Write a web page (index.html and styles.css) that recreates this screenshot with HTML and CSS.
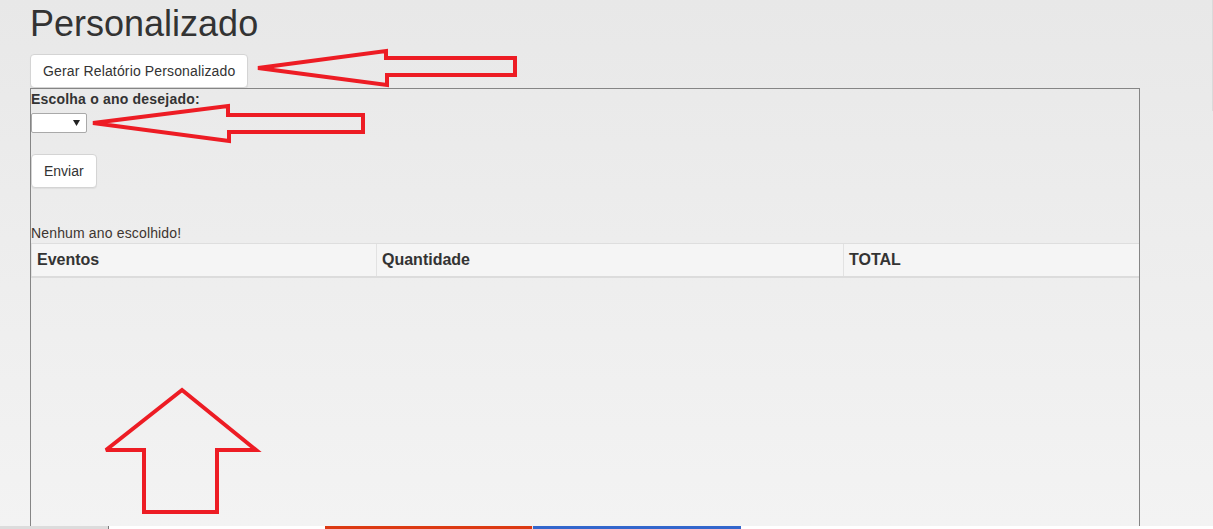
FILE: index.html
```html
<!DOCTYPE html>
<html lang="pt">
<head>
<meta charset="utf-8">
<title>Personalizado</title>
<link rel="stylesheet" href="styles.css">
</head>
<body>
<div class="page">
  <main class="content">
    <h1 class="title">Personalizado</h1>
    <div class="actions">
      <button class="btn" type="button">Gerar Relatório Personalizado</button>
    </div>
    <section class="panel">
      <form class="year-form">
        <label class="label">Escolha o ano desejado:</label>
        <div class="select">
          <svg class="caret" width="7" height="6" viewBox="0 0 7 6"><path d="M0 0H7L3.5 6Z" fill="#222"/></svg>
        </div>
        <div class="form-actions">
          <button class="btn" type="button">Enviar</button>
        </div>
      </form>
      <p class="msg">Nenhum ano escolhido!</p>
      <table class="report">
        <colgroup>
          <col class="col-ev">
          <col class="col-qt">
          <col class="col-tot">
        </colgroup>
        <thead>
          <tr>
            <th>Eventos</th>
            <th>Quantidade</th>
            <th>TOTAL</th>
          </tr>
        </thead>
        <tbody></tbody>
      </table>
    </section>
  </main>
  <div class="strip">
    <span class="seg seg-grey"></span>
    <span class="seg seg-white1"></span>
    <span class="seg seg-red"></span>
    <span class="seg seg-gap"></span>
    <span class="seg seg-blue"></span>
    <span class="seg seg-rest"></span>
  </div>
</div>

<svg class="annotations" width="1213" height="529" viewBox="0 0 1213 529">
  <polygon points="258,68 386,51 386,58 515,58 515,75 387,75 387,85" />
  <polygon points="93,123 228,106 228,115 363,115 363,132 229,132 229,141" />
  <polygon points="182,390 106,450 144,450 144,512 217,512 217,450 256,450" />
</svg>
<div class="scroll-edge"></div>
</body>
</html>
```
FILE: styles.css
```css
html, body {
  margin: 0;
  padding: 0;
  width: 1213px;
  height: 529px;
  overflow: hidden;
}

body {
  font-family: "Liberation Sans", Arial, sans-serif;
  font-size: 14px;
  line-height: 20px;
  color: #333;
  background: linear-gradient(#e8e8e8, #f3f3f3 526px);
  position: relative;
}

.page {
  display: flex;
  flex-direction: column;
  height: 529px;
}

.content {
  flex: 1;
  display: flex;
  flex-direction: column;
  padding-left: 30px;
  min-height: 0;
}

.title {
  margin: 4px 0 10px 0;
  font-size: 36px;
  line-height: 40px;
  font-weight: normal;
  color: #333;
}

.actions {
  display: flex;
}

.btn {
  font-family: "Liberation Sans", Arial, sans-serif;
  font-size: 14px;
  line-height: 20px;
  letter-spacing: 0.14px;
  color: #333;
  background: #fff;
  border: 1px solid #d4d4d4;
  border-radius: 4px;
  padding: 6px 12px;
  box-shadow: 0 1px 1px rgba(0, 0, 0, 0.06);
  height: 34px;
  box-sizing: border-box;
}

.panel {
  flex: 1;
  width: 1110px;
  box-sizing: border-box;
  border: 1px solid #858585;
  border-bottom: none;
  display: flex;
  flex-direction: column;
  overflow: hidden;
}

.year-form {
  display: flex;
  flex-direction: column;
  align-items: flex-start;
}

.label {
  font-weight: bold;
  letter-spacing: 0.2px;
  margin-bottom: 4px;
}

.select {
  width: 56px;
  height: 20px;
  box-sizing: border-box;
  background: #fff;
  border: 1px solid #a9a9a9;
  border-radius: 2px;
  display: flex;
  align-items: center;
  justify-content: flex-end;
  padding-right: 6px;
}

.caret {
  display: block;
}

.form-actions {
  margin-top: 21px;
  display: flex;
}

.form-actions .btn {
  letter-spacing: 0;
}

.msg {
  margin: 35px 0 0 0;
  color: #3d3530;
  letter-spacing: 0.15px;
}

.report {
  width: 100%;
  border-collapse: collapse;
  table-layout: fixed;
}

.report .col-ev { width: 345px; }
.report .col-qt { width: 467px; }
.report .col-tot { width: auto; }

.report th {
  background: #f5f5f5;
  text-align: left;
  font-size: 16px;
  line-height: 18px;
  font-weight: bold;
  color: #333;
  padding: 7px 5px;
  border-top: 1px solid #dedede;
  border-bottom: 2px solid #dcdcdc;
  border-left: 1px solid #e2e2e2;
}

.strip {
  height: 3px;
  display: flex;
}

.seg { display: block; height: 3px; }
.seg-grey { width: 108px; background: #dcdcdc; border-right: 1px solid #7a7a7a; }
.seg-white1 { width: 216px; background: #fff; }
.seg-red { width: 207px; background: #dc3912; }
.seg-gap { width: 1px; background: #f0e0d8; }
.seg-blue { width: 208px; background: #3366cc; }
.seg-rest { flex: 1; background: #fff; }

.annotations {
  position: absolute;
  left: 0;
  top: 0;
  pointer-events: none;
}

.annotations polygon {
  fill: none;
  stroke: #ed1c24;
  stroke-width: 4;
  stroke-linejoin: miter;
  stroke-miterlimit: 3;
}

.scroll-edge {
  position: absolute;
  right: 0;
  top: 0;
  width: 1px;
  height: 111px;
  background: #dadada;
}
```
